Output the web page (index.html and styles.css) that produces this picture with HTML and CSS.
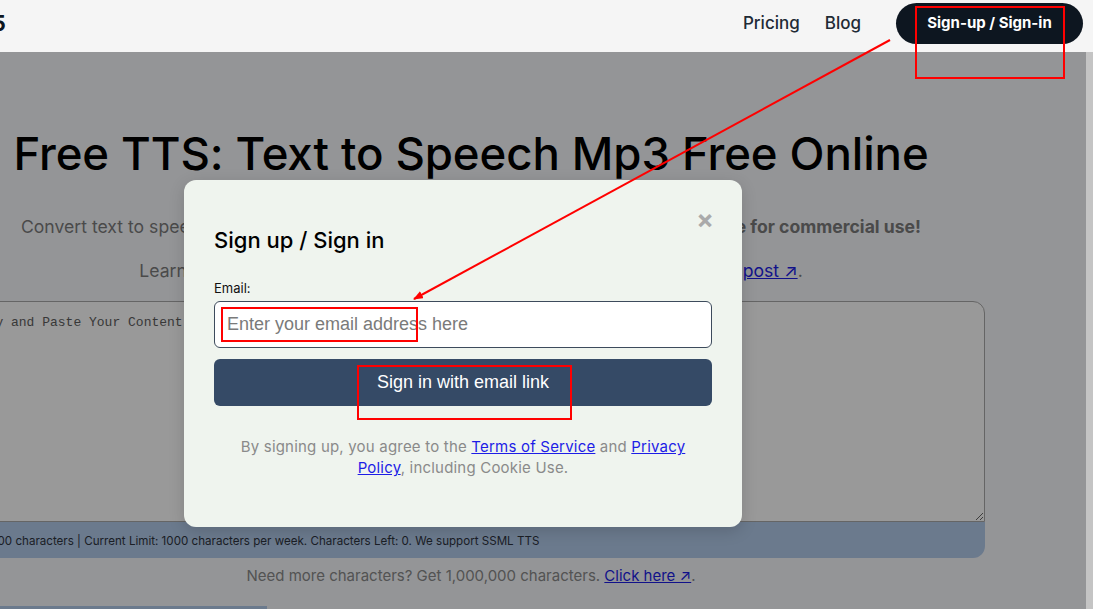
FILE: index.html
```html
<!DOCTYPE html>
<html lang="en">
<head>
<meta charset="UTF-8" />
<meta name="viewport" content="width=device-width, initial-scale=1" />
<title>Free TTS: Text to Speech Mp3 Free Online</title>
<link rel="stylesheet" href="styles.css">
</head>
<body>
  <header class="topbar">
    <div class="logo">TTS5</div>
    <nav class="nav">
      <a class="nav-link" href="#">Pricing</a>
      <a class="nav-link" href="#">Blog</a>
      <a class="nav-btn" href="#">Sign-up / Sign-in</a>
    </nav>
  </header>

  <div class="page">
    <main class="content">
      <h1 class="title">Free TTS: Text to Speech Mp3 Free Online</h1>
      <p class="lead">Convert text to speech with natural sounding voices and download the mp3, <strong>100% free for commercial use!</strong></p>
      <p class="lead">Learn more about how to use the text to speech tool in our detailed <a href="#">blog post ↗</a>.</p>

      <div class="editor">
        <textarea class="editor-text" placeholder="Copy and Paste Your Content Here..."></textarea>
        <div class="editor-bar">0/1000 characters | Current Limit: 1000 characters per week. Characters Left: 0. We support SSML TTS</div>
      </div>

      <p class="more">Need more characters? Get 1,000,000 characters. <a href="#">Click here ↗</a>.</p>
      <div class="voice-select"></div>
    </main>

    <div class="scrollbar"></div>

    <div class="overlay">
      <div class="modal">
        <span class="modal-close">&times;</span>
        <h2 class="modal-title">Sign up / Sign in</h2>
        <label class="field-label" for="email">Email:</label>
        <input class="field-input" id="email" type="email" placeholder="Enter your email address here" />
        <button class="submit-btn">Sign in with email link</button>
        <p class="terms">By signing up, you agree to the <a href="#">Terms of Service</a> and <a href="#">Privacy Policy</a>, including Cookie Use.</p>
      </div>
    </div>
  </div>

  <!-- red annotation marks drawn over the screenshot -->
  <svg class="marks" width="1093" height="609" viewBox="0 0 1093 609">
    <defs>
      <marker id="head" markerWidth="10" markerHeight="8" refX="9" refY="4" orient="auto" markerUnits="userSpaceOnUse">
        <path d="M0,0 L10,4 L0,8 Z" fill="#f00" />
      </marker>
    </defs>
    <rect x="916" y="7" width="148" height="71" fill="none" stroke="#f00" stroke-width="2" />
    <line x1="890" y1="40" x2="414" y2="299" stroke="#f00" stroke-width="2" marker-end="url(#head)" />
    <rect x="222" y="308" width="195" height="33" fill="none" stroke="#f00" stroke-width="2" />
    <rect x="358" y="366" width="213" height="53" fill="none" stroke="#f00" stroke-width="2" />
  </svg>
</body>
</html>
```

FILE: styles.css
```css
body {
  margin: 0;
  height: 609px;
  overflow: hidden;
  font-family: Inter, "Noto Sans", sans-serif;
  background: #f7f9fc;
}
a {
  color: #1d1de6;
}

/* top bar */
.topbar {
  height: 52px;
  background: #f5f5f5;
  display: flex;
  justify-content: space-between;
  align-items: flex-start;
  padding-right: 10px;
}
.logo {
  margin-left: -52px;
  margin-top: 10px;
  font-size: 22px;
  font-weight: 700;
  color: #0d1620;
}
.nav {
  display: flex;
  align-items: center;
  padding-top: 3px;
}
.nav-link {
  color: #1e2a35;
  text-decoration: none;
  font-size: 17px;
  font-weight: 500;
  margin-right: 25px;
  margin-top: -2px;
}
.nav-link + .nav-link {
  margin-right: 35px;
}
.nav-btn {
  display: flex;
  align-items: center;
  justify-content: center;
  width: 187px;
  height: 41px;
  border-radius: 21px;
  background: #0d1620;
  color: #fff;
  text-decoration: none;
  font-size: 15px;
  font-weight: 700;
  padding-bottom: 2px;
  box-sizing: border-box;
}

/* page below the bar */
.page {
  position: relative;
  height: 557px;
  display: flex;
}
.content {
  width: 1028px;
  margin-left: -43px;
  flex: none;
  text-align: center;
}
.title {
  margin: 75px 0 0;
  font-size: 45.6px;
  font-weight: 500;
  line-height: 53px;
  color: #000;
  letter-spacing: -0.1px;
}
.lead {
  margin: 34px 0 0;
  font-size: 17.6px;
  line-height: 26px;
  color: #7c7c7c;
}
.lead + .lead {
  margin-top: 18px;
}
.editor {
  margin-top: 17px;
  text-align: left;
}
.editor-text {
  display: block;
  box-sizing: border-box;
  width: 100%;
  height: 221px;
  margin: 0;
  padding: 13px 14px;
  border: 1px solid #a9a9a9;
  border-radius: 12px 12px 0 0;
  background: #fff;
  font-family: "Liberation Mono", monospace;
  font-size: 13px;
  resize: vertical;
}
.editor-text::placeholder {
  color: #5e5e5e;
}
.editor-bar {
  height: 36px;
  box-sizing: border-box;
  padding: 12px 0 0 17px;
  background: #b3cbeb;
  border-radius: 0 0 12px 12px;
  font-size: 11.6px;
  color: #2e3440;
}
.more {
  margin: 8px 0 0;
  font-size: 15px;
  color: #8a8a8a;
}
.voice-select {
  width: 310px;
  height: 40px;
  margin-top: 21px;
  background: #b3cbeb;
}
.scrollbar {
  position: absolute;
  right: 0;
  top: 0;
  width: 7px;
  height: 100%;
  background: #c4c4c4;
  z-index: 3;
}

/* modal */
.overlay {
  position: absolute;
  left: 0;
  top: 0;
  right: 7px;
  bottom: 0;
  background: rgba(0, 0, 0, 0.4);
  z-index: 2;
}
.modal {
  position: absolute;
  left: 184px;
  top: 128px;
  width: 558px;
  height: 347px;
  box-sizing: border-box;
  padding: 42px 30px 0;
  border-radius: 12px;
  background: #eff4ee;
  box-shadow: 0 4px 16px rgba(0, 0, 0, 0.15);
}
.modal-close {
  position: absolute;
  right: 28px;
  top: 27px;
  font-size: 26px;
  font-weight: 700;
  color: #aaa;
  line-height: 26px;
}
.modal-title {
  margin: 0;
  font-size: 22px;
  font-weight: 500;
  line-height: 36px;
  color: #000;
}
.field-label {
  display: block;
  margin-top: 22px;
  font-size: 13px;
  color: #111;
}
.field-input {
  display: block;
  box-sizing: border-box;
  width: 100%;
  height: 47px;
  margin-top: 5px;
  padding: 0 12px;
  border: 1px solid #3d4b5c;
  border-radius: 6px;
  background: #fff;
  font-family: "Liberation Sans", Arial, sans-serif;
  font-size: 18px;
}
.field-input::placeholder {
  color: #7a7a7a;
}
.submit-btn {
  display: block;
  width: 100%;
  height: 47px;
  margin-top: 11px;
  border: none;
  border-radius: 6px;
  background: #354a66;
  color: #fff;
  font-family: "Liberation Sans", Arial, sans-serif;
  font-size: 18px;
}
.terms {
  margin: 30px 0 0;
  padding: 0 20px;
  text-align: center;
  font-size: 15px;
  line-height: 21px;
  letter-spacing: 0.2px;
  color: #8a8a8a;
}

.marks {
  position: absolute;
  left: 0;
  top: 0;
  pointer-events: none;
  z-index: 10;
}
```
